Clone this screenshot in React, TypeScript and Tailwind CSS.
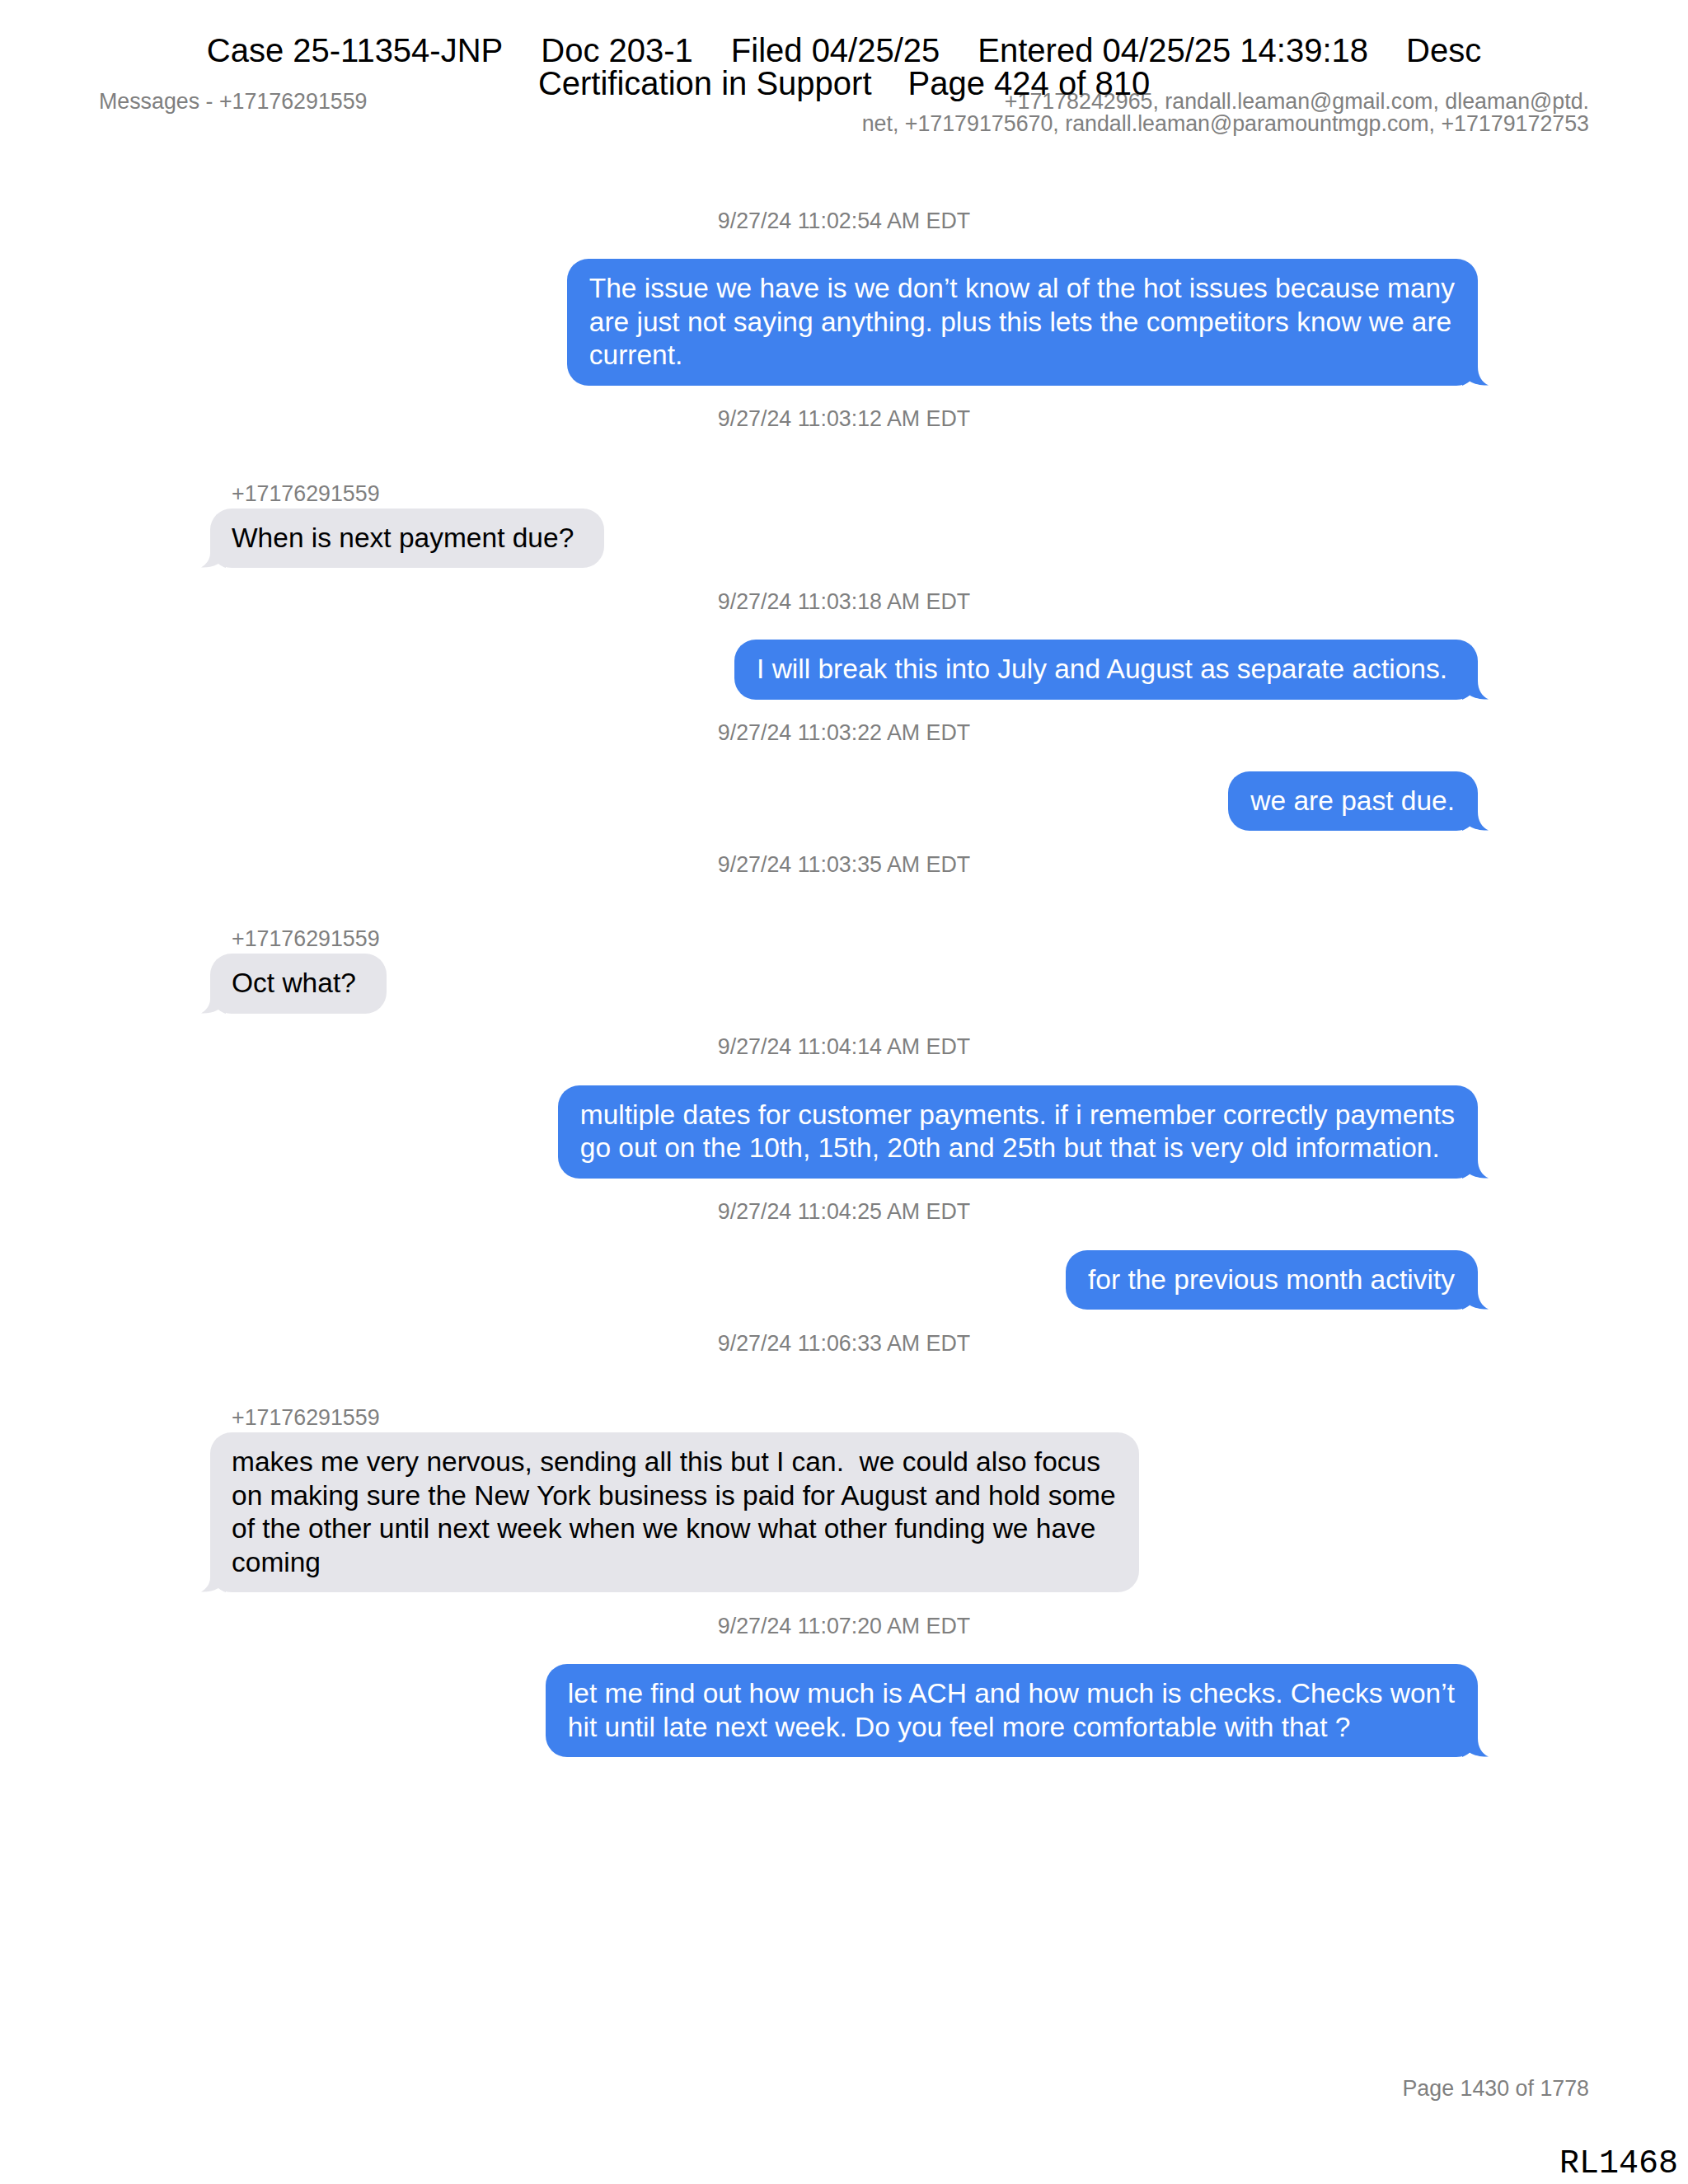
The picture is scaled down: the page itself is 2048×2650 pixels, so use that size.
import React from "react";

type Msg = { ts: string; out: boolean; sender?: string; lines: string[]; wide?: boolean };

const SENDER = "+17176291559";

const messages: Msg[] = [
  {
    ts: "9/27/24 11:02:54 AM EDT",
    out: true,
    lines: [
      "The issue we have is we don’t know al of the hot issues because many",
      "are just not saying anything. plus this lets the competitors know we are",
      "current.",
    ],
  },
  { ts: "9/27/24 11:03:12 AM EDT", out: false, sender: SENDER, lines: ["When is next payment due?"], wide: true },
  { ts: "9/27/24 11:03:18 AM EDT", out: true, lines: ["I will break this into July and August as separate actions."], wide: true },
  { ts: "9/27/24 11:03:22 AM EDT", out: true, lines: ["we are past due."] },
  { ts: "9/27/24 11:03:35 AM EDT", out: false, sender: SENDER, lines: ["Oct what?"], wide: true },
  {
    ts: "9/27/24 11:04:14 AM EDT",
    out: true,
    lines: [
      "multiple dates for customer payments. if i remember correctly payments",
      "go out on the 10th, 15th, 20th and 25th but that is very old information.",
    ],
  },
  { ts: "9/27/24 11:04:25 AM EDT", out: true, lines: ["for the previous month activity"] },
  {
    ts: "9/27/24 11:06:33 AM EDT",
    out: false,
    sender: SENDER,
    lines: [
      "makes me very nervous, sending all this but I can.  we could also focus",
      "on making sure the New York business is paid for August and hold some",
      "of the other until next week when we know what other funding we have",
      "coming",
    ],
  },
  {
    ts: "9/27/24 11:07:20 AM EDT",
    out: true,
    lines: [
      "let me find out how much is ACH and how much is checks. Checks won’t",
      "hit until late next week. Do you feel more comfortable with that ?",
    ],
  },
];

function OutTail() {
  return (
    <svg
      className="absolute bottom-0 right-[-13px]"
      width="32"
      height="30"
      viewBox="0 0 32 30"
    >
      <path
        d="M0 0 H19 V7 C19 18 24 26 32 29.5 C25 30 15 28.5 9 24.5 C6 27 3 29 0 30 Z"
        fill="#3f81ee"
      />
    </svg>
  );
}

function InTail() {
  return (
    <svg
      className="absolute bottom-0 left-[-11px]"
      width="30"
      height="26"
      viewBox="0 0 30 26"
    >
      <path
        d="M30 0 H11 V8 C11 16 6 22 0 25.5 C7 26 15 24.5 21 21 C24 23.5 27 25 30 26 Z"
        fill="#e5e5ea"
      />
    </svg>
  );
}

function Bubble({ m }: { m: Msg }) {
  const base = m.out
    ? "relative w-fit rounded-[26px] bg-[#3f81ee] pl-[27px] py-[16px] text-[33.5px] leading-[40.5px] text-white"
    : "relative w-fit rounded-[26px] bg-[#e5e5ea] pl-[26px] py-[16px] text-[33.5px] leading-[40.5px] text-black";
  return (
    <div className={base + (m.wide ? " pr-[37px]" : " pr-[28px]")}>
      {m.lines.map((l, i) => (
        <div key={i} className="whitespace-pre">
          {l}
        </div>
      ))}
      {m.out ? <OutTail /> : <InTail />}
    </div>
  );
}

export default function App() {
  return (
    <div className="relative h-[2650px] w-[2048px] overflow-hidden bg-white font-['Liberation_Sans',Arial,sans-serif]">
      {/* page content */}
      <div className="px-[120px] pt-[110px]">
        <div className="flex justify-between text-[26.8px] leading-[27px] text-[#7f7f7f]">
          <div>Messages - +17176291559</div>
          <div className="text-right">
            <div>+17178242965, randall.leaman@gmail.com, dleaman@ptd.</div>
            <div>net, +17179175670, randall.leaman@paramountmgp.com, +17179172753</div>
          </div>
        </div>

        <div className="mt-[63px] px-[135px]">
          {messages.map((m, i) => (
            <div key={i} className="flex flex-col">
              <div className="mt-[25.5px] h-[30px] text-center text-[26.8px] leading-[30px] text-[#7f7f7f]">
                {m.ts}
              </div>
              {m.out ? (
                <div className="mt-[31.5px] flex justify-end">
                  <Bubble m={m} />
                </div>
              ) : (
                <div className="flex flex-col items-start">
                  <div className="mt-[60.5px] pl-[26px] text-[26.8px] leading-[30px] text-[#7f7f7f]">
                    {m.sender}
                  </div>
                  <div className="mt-[3px]">
                    <Bubble m={m} />
                  </div>
                </div>
              )}
            </div>
          ))}
        </div>

        <div className="mt-[387px] text-right text-[26.8px] leading-[30px] text-[#7f7f7f]">
          Page 1430 of 1778
        </div>
      </div>
      <div className="mt-[57px] pr-[12px] text-right font-['Liberation_Mono',monospace] text-[40px] leading-[40px] text-black">
        RL1468
      </div>

      {/* court filing stamp overlay */}
      <div className="absolute inset-x-0 top-[41px] text-[40px] leading-[40px] text-black">
        <div className="flex justify-center gap-[46px]">
          <span>Case 25-11354-JNP</span>
          <span>Doc 203-1</span>
          <span>Filed 04/25/25</span>
          <span>Entered 04/25/25 14:39:18</span>
          <span>Desc</span>
        </div>
        <div className="flex justify-center gap-[44px]">
          <span>Certification in Support</span>
          <span>Page 424 of 810</span>
        </div>
      </div>
    </div>
  );
}
